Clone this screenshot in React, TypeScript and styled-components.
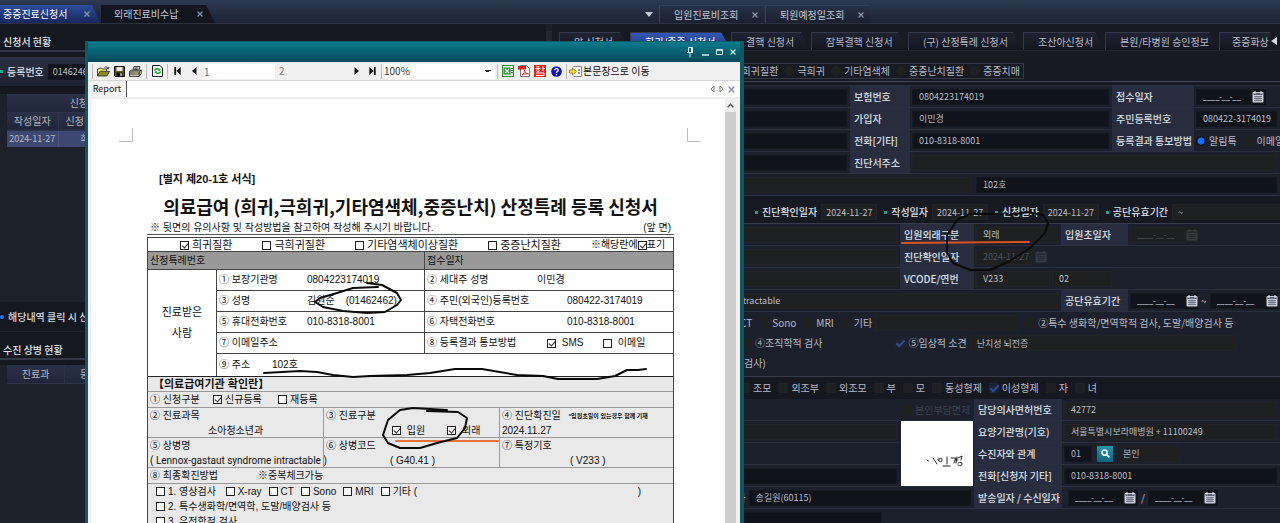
import React, { useId } from "react";
import styled, { createGlobalStyle, css } from "styled-components";

const Global = createGlobalStyle`
  * { box-sizing: border-box; }
  html, body { margin: 0; background: #1c202b; }
  body { font: 10px/14px "Noto Sans CJK KR", sans-serif; color: #b6bac6; }
  button, input, select { font: inherit; color: inherit; margin: 0; }
  button { padding: 0; border: 0; background: none; }
`;

/* ---------- shell ---------- */

const Page = styled.div`
  position: relative;
  display: flex;
  flex-direction: column;
  height: 100vh;
  overflow: hidden;
`;

const TopBar = styled.nav`
  display: flex;
  align-items: flex-end;
  height: 24px;
  flex: none;
  background: linear-gradient(#2c3951, #1c2233);
  border-bottom: 1px solid #2c3140;
`;

const TopGroup = styled.div<{ $width?: number }>`
  display: flex;
  flex: ${(p) => (p.$width ? "none" : "1")};
  width: ${(p) => (p.$width ? `${p.$width}px` : "auto")};
  gap: 1px;
`;

const TopTab = styled.div<{ $look: "active" | "dark" | "plain" }>`
  display: flex;
  align-items: center;
  justify-content: space-between;
  height: 18px;
  color: #c3c7d1;
  ${(p) =>
    p.$look === "active" &&
    css`
      width: 100px;
      padding: 0 10px 0 3px;
      color: #fff;
      background: linear-gradient(#2c4c9c, #16275c);
      clip-path: polygon(0 0, 92% 0, 100% 100%, 0 100%);
    `}
  ${(p) =>
    p.$look === "dark" &&
    css`
      width: 114px;
      padding: 0 12px 0 13px;
      background: #12141f;
      clip-path: polygon(0 0, 92% 0, 100% 100%, 0 100%);
    `}
  ${(p) =>
    p.$look === "plain" &&
    css`
      width: 105px;
      padding: 0 6px 0 14px;
      background: linear-gradient(#273048, #1b2031);
      border-left: 1px solid #3b4358;
      border-top: 1px solid #343c50;
    `}
`;

const CloseButton = styled.button`
  display: flex;
  color: #8b93a8;
`;

const OverflowButton = styled.button`
  display: flex;
  align-items: center;
  width: 14px;
  height: 18px;
  color: #c3cbd9;
`;

const Body = styled.div`
  display: flex;
  flex: 1;
  min-height: 0;
`;

/* ---------- left column ---------- */

const Sidebar = styled.aside`
  display: flex;
  flex-direction: column;
  width: 546px;
  flex: none;
  background: #151821;
`;

const SectionHead = styled.h2`
  margin: 0 0 5px;
  padding: 11px 3px 2px;
  height: 28px;
  font-size: 10px;
  font-weight: 500;
  color: #e4e6ec;
  border-bottom: 2px solid #343746;
`;

const SearchBar = styled.div`
  display: flex;
  align-items: center;
  gap: 4px;
  height: 29px;
  margin-bottom: 8px;
  background: linear-gradient(#2a3044, #1e2333);
  label { font-weight: 500; color: #dfe2ea; }
`;

const Dot = styled.i<{ $size?: number; $color?: string }>`
  flex: none;
  width: ${(p) => p.$size ?? 3}px;
  height: ${(p) => p.$size ?? 3}px;
  border-radius: ${(p) => (p.$size ? "50%" : "0")};
  background: ${(p) => p.$color ?? "#1fa08c"};
`;

const TableWrap = styled.div<{ $height?: number }>`
  flex: ${(p) => (p.$height ? "none" : "1")};
  height: ${(p) => (p.$height ? `${p.$height}px` : "auto")};
  background: #1d212c;
`;

const DataTable = styled.table<{ $inset?: number }>`
  border-collapse: collapse;
  table-layout: fixed;
  width: 174px;
  margin-left: ${(p) => p.$inset ?? 0}px;
  th {
    height: 18px;
    padding: 0;
    font-weight: 400;
    background: linear-gradient(#2a3146, #20263a);
    border: 1px solid #2d3449;
    border-width: 0 1px 1px 0;
  }
  td {
    height: 17px;
    padding: 0;
    text-align: center;
    font-size: 9px;
    background: #3c4871;
    border-right: 1px solid #4a5680;
  }
`;

const Notice = styled.p`
  display: flex;
  align-items: center;
  gap: 4px;
  height: 30px;
  margin: 0;
  font-weight: 500;
  color: #d7dae2;
  border-bottom: 1px solid #1d202b;
`;

/* ---------- right column ---------- */

const Splitter = styled.div`
  width: 6px;
  flex: none;
  margin-top: 7px;
  background: #232733;
`;

const Main = styled.main`
  flex: 1;
  min-width: 0;
  background: #171923;
`;

const SubTabs = styled.div`
  display: flex;
  align-items: center;
  height: 19px;
  margin: 8px 0 12px;
  padding-left: 7px;
  overflow: hidden;
  border-bottom: 1px solid #20232f;
`;

const SubTab = styled.button<{ $width: number; $active?: boolean; $square?: boolean }>`
  flex: none;
  width: ${(p) => p.$width}px;
  height: 18px;
  padding-left: ${(p) => (p.$square ? 12 : 14)}px;
  text-align: left;
  white-space: nowrap;
  color: ${(p) => (p.$active ? "#fff" : "#b6bac6")};
  background: ${(p) => (p.$active ? "linear-gradient(#3158b4, #1b3580)" : "linear-gradient(#1f2231, #131520)")};
  border-left: 1px solid #34384a;
  border-top: 1px solid #34384a;
  clip-path: ${(p) => (p.$square ? "none" : "polygon(0 0, calc(100% - 10px) 0, 100% 100%, 0 100%)")};
`;

const ScrollLeft = styled.button`
  display: flex;
  margin-left: auto;
  padding: 0 3px 0 1px;
  color: #d4d8e0;
`;

const RadioBox = styled.div`
  display: flex;
  align-items: center;
  justify-content: flex-end;
  gap: 6px;
  width: 472px;
  height: 16px;
  padding-right: 3px;
  border: 1px solid #353947;
`;

const Divider = styled.div<{ $top?: number }>`
  height: 5px;
  margin-top: ${(p) => p.$top ?? 0}px;
  border-top: 1px solid #434760;
  border-bottom: 1px solid #292d3b;
`;

const Choice = styled.label<{ $dim?: boolean }>`
  display: inline-flex;
  align-items: center;
  gap: 3px;
  white-space: nowrap;
  color: ${(p) => (p.$dim ? "#3b404d" : "inherit")};
`;

const Radio = styled.input.attrs({ type: "radio" })`
  appearance: none;
  width: 10px;
  height: 10px;
  border-radius: 50%;
  background: #1f2022;
  &:checked { background: radial-gradient(#1670ff 0 3px, #0e1119 4px); }
`;

const Box = styled.input.attrs({ type: "checkbox" })`
  appearance: none;
  position: relative;
  width: 10px;
  height: 10px;
  background: #1f2022;
  &:checked { background: #1b2233; }
  &:checked::after {
    content: "";
    position: absolute;
    left: 3px;
    top: 0;
    width: 3px;
    height: 7px;
    border: solid #2a4f8e;
    border-width: 0 2px 2px 0;
    transform: rotate(45deg);
  }
`;

const Row = styled.div<{ $cols: string }>`
  display: grid;
  grid-template-columns: ${(p) => p.$cols};
  align-items: stretch;
  height: 22px;
  background: #1c202c;
  border-bottom: 1px solid #2a2f3e;
`;

const Cell = styled.div<{ $pad?: number; $gap?: number }>`
  display: flex;
  align-items: center;
  gap: ${(p) => p.$gap ?? 3}px;
  min-width: 0;
  padding: 0 3px 0 ${(p) => p.$pad ?? 2}px;
  white-space: nowrap;
`;

const Label = styled.label`
  display: flex;
  align-items: center;
  padding-left: 4px;
  font-weight: 500;
  color: #dde0e8;
  background: #272d3e;
  white-space: nowrap;
`;

const Field = styled.input<{ $read?: boolean; $width?: number; $pad?: number; $dim?: boolean }>`
  flex: ${(p) => (p.$width ? "none" : "1")};
  width: ${(p) => (p.$width ? `${p.$width}px` : "auto")};
  min-width: 0;
  height: 16px;
  padding: 0 0 0 ${(p) => p.$pad ?? 6}px;
  border: 1px solid ${(p) => (p.$read ? "#212328" : "#141821")};
  outline: 0;
  font-size: 9px;
  color: ${(p) => (p.$dim ? "#4c4f57" : "#b9bdc8")};
  background: ${(p) => (p.$read ? "#1f2022" : "#10131b")};
`;

const DateBox = styled.span<{ $read?: boolean }>`
  display: inline-flex;
  align-items: center;
  width: 70px;
  height: 16px;
  background: ${(p) => (p.$read ? "#1f2022" : "#10131b")};
`;

const DateField = styled(Field)`
  font-family: Roboto, sans-serif;
`;

const IconButton = styled.button<{ $dim?: boolean }>`
  display: flex;
  opacity: ${(p) => (p.$dim ? 0.15 : 1)};
`;

const FindButton = styled.button`
  display: flex;
  align-items: center;
  justify-content: center;
  width: 16px;
  height: 16px;
  margin: 0 4px 0 2px;
  color: #fff;
  background: linear-gradient(#2295ab, #0d6481);
`;

const Band = styled.div<{ $pad: number; $height: number; $gap: number; $top?: number; $tone?: string; $line?: boolean }>`
  display: flex;
  align-items: center;
  gap: ${(p) => p.$gap}px;
  height: ${(p) => p.$height}px;
  padding-top: ${(p) => p.$top ?? 0}px;
  padding-left: ${(p) => p.$pad}px;
  white-space: nowrap;
  background: ${(p) => p.$tone ?? "#1c202c"};
  border-bottom: ${(p) => (p.$line ? "1px solid #383c4a" : "0")};
`;

const DateItem = styled.div`
  display: flex;
  align-items: center;
  gap: 4px;
  label { font-weight: 500; color: #dde0e8; }
`;

const LowerGrid = styled.div`
  display: grid;
  grid-template-columns: 348px 74px 88px 1fr;
  grid-auto-rows: 22px;
  background: #1c202c;
  > * { border-bottom: 1px solid #2a2f3e; }
`;

const Signature = styled.div`
  grid-row: 2 / span 3;
  grid-column: 2;
  display: flex;
  margin: 0 1px 0 1px;
  background: #fff;
`;

const Wide = styled(Cell)`
  grid-column: 1 / span 2;
`;

/* ---------- report window ---------- */

const Window = styled.section`
  position: absolute;
  left: 85px;
  top: 41px;
  bottom: 0;
  width: 659px;
  display: flex;
  flex-direction: column;
  border: solid #0f5866;
  border-width: 1px 4px 0 3px;
  background: #fff;
  color: #111;
  font-family: "Liberation Sans", "Noto Sans CJK KR", sans-serif;
`;

const TitleBar = styled.header`
  display: flex;
  flex: none;
  align-items: center;
  justify-content: flex-end;
  gap: 4px;
  height: 20px;
  padding-right: 2px;
  color: #d7eef2;
  background: linear-gradient(#0a7b8b, #04485a);
`;

const ToolBar = styled.div`
  display: flex;
  flex: none;
  align-items: center;
  height: 19px;
  padding-left: 4px;
  font-family: "Noto Sans CJK KR", sans-serif;
  background: #f0f0f0;
  border-bottom: 1px solid #d8d8d8;
`;

const Tool = styled.button<{ $width: number }>`
  display: flex;
  align-items: center;
  justify-content: center;
  flex: none;
  width: ${(p) => p.$width}px;
  height: 16px;
`;

const Sep = styled.i`
  flex: none;
  width: 1px;
  height: 15px;
  margin: 0 2px;
  background: #bcbcbc;
  &:first-child { margin-left: 0; }
`;

const PageInput = styled.input`
  width: 71px;
  height: 15px;
  padding: 0;
  border: 0;
  background: #fff;
  color: #666;
`;

const PageTotal = styled.span`
  width: 72px;
  padding-left: 4px;
  color: #888;
`;

const Zoom = styled.select`
  width: 111px;
  height: 15px;
  padding: 0;
  border: 0;
  appearance: none;
  font-size: 10px;
  color: #333;
  background: linear-gradient(45deg, transparent 50%, #222 50%) 101px 6px / 3px 3px no-repeat,
    linear-gradient(-45deg, transparent 50%, #222 50%) 104px 6px / 3px 3px no-repeat, #fff;
`;

const MoveButton = styled.button`
  display: flex;
  align-items: center;
  gap: 1px;
  white-space: nowrap;
`;

const TabStrip = styled.div`
  display: flex;
  flex: none;
  justify-content: space-between;
  height: 18px;
  border-bottom: 2px solid #efefef;
`;

const ReportTab = styled.button`
  width: 39px;
  font-size: 9px;
  color: #222;
  background: #f4f4f4;
  border-right: 1px solid #555;
  font-family: "Noto Sans CJK KR", sans-serif;
`;

const StripTools = styled.div`
  display: flex;
  align-items: center;
  gap: 4px;
  padding-right: 5px;
  color: #777;
`;

const Viewer = styled.div`
  display: flex;
  flex: 1;
  min-height: 0;
  border-left: 3px solid #f0f0f0;
`;

const Paper = styled.div`
  flex: 1;
  min-width: 0;
  overflow: hidden;
`;

const ScrollTrack = styled.div`
  display: flex;
  flex-direction: column;
  align-items: center;
  width: 15px;
  padding-right: 4px;
  background: #f0f0f0;
`;

const ScrollUp = styled.button`
  display: flex;
  align-items: center;
  height: 13px;
  color: #555;
`;

const ScrollThumb = styled.div`
  flex: 1;
  width: 11px;
  background: #cdcdcd;
`;

const Corners = styled.div`
  display: flex;
  justify-content: space-between;
  margin: 29px 24px 29px 28px;
  i { width: 14px; height: 14px; border-bottom: 1px solid #bbb; }
  i:first-child { border-right: 1px solid #bbb; }
  i:last-child { border-left: 1px solid #bbb; }
`;

const Sheet = styled.article`
  width: 527px;
  margin-left: 56px;
`;

const FormNo = styled.p`
  margin: 0 0 3px 12px;
  font-size: 11px;
  line-height: 16px;
  font-weight: 700;
`;

const DocTitle = styled.h1`
  margin: 0;
  font: 700 18px/32px "Noto Sans CJK KR", sans-serif;
  text-align: center;
  white-space: nowrap;
`;

const SubLine = styled.p`
  display: flex;
  justify-content: space-between;
  margin: 0 0 2px;
  padding: 0 3px;
  line-height: 12px;
  border-bottom: 1px solid #555;
`;

const Form = styled.div`
  border: 1px solid #444;
  border-bottom: 0;
`;

const DocRow = styled.div<{ $h: number; $cols?: string; $bg?: string }>`
  display: grid;
  grid-template-columns: ${(p) => p.$cols ?? "1fr"};
  height: ${(p) => p.$h}px;
  background: ${(p) => p.$bg ?? "transparent"};
  border-bottom: 1px solid #444;
  &:last-child { border-bottom-width: 0; }
  > * + * { border-left: 1px solid #444; }
`;

const Applicant = styled.div`
  display: grid;
  grid-template-columns: 69px 1fr;
  border-bottom: 1px solid #222;
`;

const ApplicantName = styled.div`
  display: flex;
  align-items: center;
  justify-content: center;
  border-right: 1px solid #444;
  font-size: 11px;
  line-height: 21px;
  text-align: center;
`;

const DocCell = styled.div<{ $pad?: number; $gap?: number }>`
  display: flex;
  align-items: center;
  gap: ${(p) => p.$gap ?? 0}px;
  padding-left: ${(p) => p.$pad ?? 2}px;
  min-width: 0;
  white-space: pre;
`;

const Term = styled.span<{ $w?: number }>`
  flex: none;
  width: ${(p) => (p.$w ? `${p.$w}px` : "auto")};
`;

const CloseParen = styled.span`
  margin: 0 32px 0 auto;
`;

const Provider = styled.div`
  background: #e9e9e9;
  ${DocRow} { border-color: #999; }
  ${DocRow} > * + * { border-color: #999; }
`;

const ProviderTitle = styled.h2`
  margin: 0;
  padding-left: 5px;
  font-size: 11px;
  line-height: 14px;
  font-weight: 700;
  border-bottom: 1px solid #999;
`;

const Stack = styled.div`
  display: flex;
  flex-direction: column;
  min-width: 0;
  padding-left: 2px;
`;

const Line = styled.div<{ $pad?: number; $gap?: number }>`
  display: flex;
  align-items: center;
  gap: ${(p) => p.$gap ?? 0}px;
  height: 15px;
  padding-left: ${(p) => p.$pad ?? 0}px;
  white-space: pre;
`;

const Diagnosis = styled(Line)`
  font-family: Roboto, sans-serif;
`;

const Tiny = styled.small`
  margin-left: 8px;
  font-size: 6px;
  font-weight: 700;
`;

const Mark = styled.label<{ $size?: number }>`
  display: flex;
  align-items: center;
  gap: 3px;
  font-size: ${(p) => p.$size ?? 10}px;
`;

const Hint = styled.label`
  display: flex;
  align-items: center;
`;

const Tick = styled.input.attrs({ type: "checkbox" })`
  appearance: none;
  position: relative;
  flex: none;
  width: 9px;
  height: 9px;
  border: 1px solid #222;
  background: #fff;
  &:checked::after {
    content: "";
    position: absolute;
    left: 2px;
    top: 0;
    width: 3px;
    height: 5px;
    border: solid #222;
    border-width: 0 1px 1px 0;
    transform: rotate(40deg);
  }
`;

const Ink = styled.svg`
  position: absolute;
  left: 0;
  top: 0;
  pointer-events: none;
  fill: none;
  stroke-linecap: round;
  stroke-linejoin: round;
`;

/* ---------- icons ---------- */

const CrossIcon = ({ size = 6 }: { size?: number }) => (
  <svg width={size} height={size} viewBox="0 0 6 6" stroke="currentColor" strokeWidth="1.2">
    <path d="M.5.5l5 5M5.5.5l-5 5" />
  </svg>
);

const CalendarIcon = () => (
  <svg width="12" height="12" viewBox="0 0 12 12">
    <rect x="0.5" y="1" width="11" height="10.5" rx="1" fill="#c9ccd6" />
    <rect x="1.5" y="2" width="9" height="2" fill="#5b6275" />
    <path d="M3 0v3M9 0v3" stroke="#e6e8ee" />
    <path d="M2 5.500h8M2 7.500h8M2 9.500h8M4 5v5M6 5v5M8 5v5" stroke="#4a5062" strokeWidth=".6" />
  </svg>
);

const SearchIcon = () => (
  <svg width="9" height="9" viewBox="0 0 9 9" fill="none" stroke="currentColor" strokeWidth="1.6">
    <circle cx="3.6" cy="3.6" r="2.6" />
    <path d="M5.6 5.6l2.8 2.8" />
  </svg>
);

const FolderIcon = () => (
  <svg width="13" height="11" viewBox="0 0 13 11">
    <path d="M.5 10V3h1l1-1h2l1 1h4v2" fill="#f5ef7a" stroke="#333" strokeWidth=".9" />
    <path d="M.5 10L3 5.3h9.600L9.800 10z" fill="#8e8a1c" stroke="#333" strokeWidth=".9" />
    <path d="M7.500 1.400c1.500-1 3-.6 3.600 1M11.800 1l-.5 1.800-1.700-.6" fill="none" stroke="#222" strokeWidth=".9" />
  </svg>
);

const SaveIcon = () => (
  <svg width="11" height="11" viewBox="0 0 11 11">
    <path d="M.5.5h10v10h-9l-1-1z" fill="#5c5b12" stroke="#111" />
    <rect x="2.500" y="1" width="6" height="4" fill="#e6e6e6" />
    <rect x="2.500" y="6.500" width="6" height="4" fill="#111" />
    <rect x="6.300" y="7.300" width="1.400" height="2.600" fill="#eee" />
  </svg>
);

const PrintIcon = () => (
  <svg width="13" height="11" viewBox="0 0 13 11" stroke="#222" strokeWidth=".9">
    <path d="M3.500 5L5 .6h6L9.500 5" fill="#fff" />
    <path d="M5.300 2h4M4.900 3.400h4" />
    <path d="M.6 5.400L2.400 4.200h9.800v3.600l-2 2.600H.6z" fill="#d6d6c8" />
    <path d="M.6 6h9.600l2-1.800M10.200 6v4M.6 8h9.600" fill="none" />
    <path d="M6 7h3" stroke="#c8b800" />
  </svg>
);

const RefreshIcon = () => (
  <svg width="11" height="12" viewBox="0 0 11 12" fill="none">
    <path d="M.5.5h7.500l2.500 2.500v8.500h-10z" fill="#fff" stroke="#222" />
    <path d="M2.500 5.500c.6-2 3-2.400 4.500-1M8.500 6.500c-.6 2-3 2.400-4.500 1" stroke="#19a03c" strokeWidth="1.500" />
    <path d="M8.300 3v2.700H5.600zM2.700 9V6.300h2.700z" fill="#19a03c" />
  </svg>
);

const StepIcon = ({ dir, bar }: { dir: "left" | "right"; bar?: boolean }) => (
  <svg width="7" height="8" viewBox="0 0 7 8" fill="#111">
    <g transform={dir === "right" ? "matrix(-1 0 0 1 7 0)" : undefined}>
      {bar && <path d="M.3 0h1.800v8H.3z" />}
      {bar ? <path d="M6.700 0v8L2.400 4z" /> : <path d="M5.500 0v8L1 4z" />}
    </g>
  </svg>
);

const ExcelIcon = () => (
  <svg width="12" height="12" viewBox="0 0 12 12">
    <rect x=".5" y=".5" width="11" height="11" fill="#e4f0e2" stroke="#3a8a3c" />
    <rect x="1.500" y="2.500" width="7" height="7" fill="#2f8f3a" />
    <path d="M3 4l4 4M7 4L3 8" stroke="#fff" strokeWidth="1.300" />
    <path d="M9 3.500h2M9 5.500h2M9 7.500h2" stroke="#3a8a3c" />
  </svg>
);

const PdfIcon = () => (
  <svg width="12" height="12" viewBox="0 0 12 12">
    <path d="M2.500.5h6l3 3v8h-9z" fill="#fff" stroke="#777" />
    <rect x="0" y="1" width="8" height="3.500" fill="#d32118" />
    <path d="M4 10c2-1.500 2.500-3 2.500-5 .3 2.500 1.500 3.500 4 3.800-2.500-.2-4.500.2-6.500 1.200z" fill="none" stroke="#d32118" strokeWidth=".9" />
  </svg>
);

const HwpIcon = () => (
  <svg width="12" height="12" viewBox="0 0 12 12">
    <rect width="12" height="12" fill="#d92a20" />
    <path d="M1.500 3.500h5M2.500 1.800h3M9 1.500v4.500M9 3.500h2M2 8h8v2.500H2" stroke="#fff" fill="none" />
    <circle cx="4" cy="5.500" r="1.200" fill="none" stroke="#fff" strokeWidth=".9" />
  </svg>
);

const HelpIcon = () => (
  <svg width="11" height="11" viewBox="0 0 11 11">
    <circle cx="5.500" cy="5.500" r="5.300" fill="#0a12b8" />
    <path d="M3.800 4.200c0-2.200 3.500-2.200 3.500 0 0 1.200-1.800 1.200-1.800 2.600" fill="none" stroke="#fff" strokeWidth="1.300" />
    <circle cx="5.500" cy="8.600" r=".8" fill="#fff" />
  </svg>
);

const MoveIcon = () => (
  <svg width="13" height="11" viewBox="0 0 13 11">
    <path d="M4.500.5h8v10h-8" fill="#fff" stroke="#888" />
    <path d="M.5 4h3V2l4 3.500-4 3.500V7h-3z" fill="#f6d93a" stroke="#8a7a10" strokeWidth=".8" />
    <path d="M9 4h2M9 7h2" stroke="#333" />
  </svg>
);

/* ---------- small pieces ---------- */

const DateEntry = ({ name, read }: { name: string; read?: boolean }) => (
  <DateBox $read={read}>
    <DateField aria-label={name} defaultValue="____-__-__" $width={56} $read={read} $dim={read} />
    <IconButton $dim={read} aria-label={`${name} 달력`}>
      <CalendarIcon />
    </IconButton>
  </DateBox>
);

const LabelCell = ({ text, children }: { text: string; children: (id: string) => React.ReactNode }) => {
  const id = useId();
  return (
    <>
      <Label htmlFor={id}>{text}</Label>
      {children(id)}
    </>
  );
};

const Check = ({ text, on, size }: { text: string; on?: boolean; size?: number }) => (
  <Mark $size={size}>
    <Tick defaultChecked={on} />
    {text}
  </Mark>
);

const ISSUE_DATES = ["진단확인일자", "작성일자", "신청일자"];
const KIN = ["조모", "외조부", "외조모", "부", "모", "동성형제", "이성형제", "자", "녀"];
const SUB_TABS: { name: string; width: number; active?: boolean; square?: boolean }[] = [
  { name: "암 신청서", width: 71 },
  { name: "희귀/중증 신청서", width: 101, active: true },
  { name: "결핵 신청서", width: 80 },
  { name: "잠복결핵 신청서", width: 97 },
  { name: "(구) 산정특례 신청서", width: 115 },
  { name: "조산아신청서", width: 82 },
  { name: "본원/타병원 승인정보", width: 114 },
  { name: "중증화상", width: 51, square: true },
];

const TOP_COLS = "298px 60px 1fr 82px 86px";
const MID_COLS = "348px 74px 87px 67px 1fr";

const SidePanel = () => (
  <Sidebar>
    <SectionHead>신청서 현황</SectionHead>
    <SearchBar>
      <Dot />
      <label htmlFor="reg-no">등록번호</label>
      <Field id="reg-no" defaultValue="01462462" $width={70} $pad={4} />
    </SearchBar>
    <TableWrap $height={208}>
      <DataTable $inset={7}>
        <colgroup>
          <col width="51" />
          <col width="61" />
          <col width="62" />
        </colgroup>
        <thead>
          <tr>
            <th colSpan={3}>신청서 정보</th>
          </tr>
          <tr>
            <th>작성일자</th>
            <th>신청서구분</th>
            <th>상태</th>
          </tr>
        </thead>
        <tbody>
          <tr>
            <td>2024-11-27</td>
            <td>희귀</td>
            <td>등록</td>
          </tr>
        </tbody>
      </DataTable>
    </TableWrap>
    <Notice>
      <Dot $size={4} $color="#1670ff" />
      해당내역 클릭 시 신청서 조회
    </Notice>
    <SectionHead>수진 상병 현황</SectionHead>
    <TableWrap>
      <DataTable $inset={7}>
        <thead>
          <tr>
            <th>진료과</th>
            <th>등록일</th>
            <th>상병</th>
          </tr>
        </thead>
      </DataTable>
    </TableWrap>
  </Sidebar>
);

const MainPanel = () => (
  <Main>
    <SubTabs>
      {SUB_TABS.map(({ name, width, active, square }) => (
        <SubTab key={name} $width={width} $active={active} $square={square}>
          {name}
        </SubTab>
      ))}
      <ScrollLeft aria-label="이전 탭">
        <svg width="6" height="8" viewBox="0 0 6 8" fill="currentColor">
          <path d="M6 0v8L0 4z" />
        </svg>
      </ScrollLeft>
    </SubTabs>
    <RadioBox>
      {["희귀질환", "극희귀", "기타염색체", "중증난치질환", "중증치매"].map((t) => (
        <Choice key={t}>
          <Radio name="kind" />
          {t}
        </Choice>
      ))}
    </RadioBox>
    <Divider $top={2} />

    <Row $cols={TOP_COLS}>
      <Cell>
        <Field aria-label="보험구분" />
      </Cell>
      <LabelCell text="보험번호">
        {(id) => (
          <Cell>
            <Field id={id} defaultValue="0804223174019" />
          </Cell>
        )}
      </LabelCell>
      <Label as="span">접수일자</Label>
      <Cell>
        <DateEntry name="접수일자" />
      </Cell>
    </Row>
    <Row $cols={TOP_COLS}>
      <Cell>
        <Field aria-label="보장기관" />
      </Cell>
      <LabelCell text="가입자">
        {(id) => (
          <Cell>
            <Field id={id} defaultValue="이민경" />
          </Cell>
        )}
      </LabelCell>
      <LabelCell text="주민등록번호">
        {(id) => (
          <Cell>
            <Field id={id} defaultValue="080422-3174019" />
          </Cell>
        )}
      </LabelCell>
    </Row>
    <Row $cols={TOP_COLS}>
      <Cell>
        <Field aria-label="휴대전화" />
      </Cell>
      <LabelCell text="전화[기타]">
        {(id) => (
          <Cell>
            <Field id={id} defaultValue="010-8318-8001" />
          </Cell>
        )}
      </LabelCell>
      <Label as="span">등록결과 통보방법</Label>
      <Cell $gap={7}>
        <Choice>
          <Radio name="notice" defaultChecked />
          알림톡
        </Choice>
        <Choice>
          <Radio name="notice" />
          이메일
        </Choice>
      </Cell>
    </Row>
    <Row $cols="298px 60px 1fr">
      <Cell>
        <Field aria-label="이메일" />
      </Cell>
      <LabelCell text="진단서주소">
        {(id) => (
          <Cell>
            <Field id={id} $read />
          </Cell>
        )}
      </LabelCell>
    </Row>
    <Row $cols="422px 1fr">
      <Cell>
        <Field aria-label="주소" $read />
      </Cell>
      <Cell>
        <Field aria-label="상세주소" defaultValue="102호" />
      </Cell>
    </Row>

    <Band $pad={203} $height={28} $gap={7} $top={5} $tone="#171922" $line>
      {ISSUE_DATES.map((name) => (
        <DateItem key={name}>
          <Dot />
          <label htmlFor={name}>{name}</label>
          <Field id={name} defaultValue="2024-11-27" $width={56} $pad={4} $read />
        </DateItem>
      ))}
      <DateItem>
        <Dot />
        <label htmlFor="valid">공단유효기간</label>
        <Field id="valid" defaultValue="~" $width={110} $pad={5} $read />
      </DateItem>
    </Band>

    <Row $cols={MID_COLS}>
      <Cell>
        <Field aria-label="진료과" $read />
      </Cell>
      <LabelCell text="입원외래구분">
        {(id) => (
          <Cell>
            <Field id={id} defaultValue="외래" $read />
          </Cell>
        )}
      </LabelCell>
      <Label as="span">입원초일자</Label>
      <Cell>
        <DateEntry name="입원초일자" read />
      </Cell>
    </Row>
    <Row $cols={MID_COLS}>
      <Cell>
        <Field aria-label="진료의사" $read />
      </Cell>
      <LabelCell text="진단확인일자">
        {(id) => (
          <Cell>
            <Field id={id} defaultValue="2024-11-27" $width={56} $read $dim />
            <IconButton $dim aria-label="진단확인일자 달력">
              <CalendarIcon />
            </IconButton>
          </Cell>
        )}
      </LabelCell>
    </Row>
    <Row $cols="348px 74px 1fr">
      <Cell>
        <Field aria-label="상병코드" $read />
      </Cell>
      <LabelCell text="VCODE/연번">
        {(id) => (
          <Cell $gap={2}>
            <Field id={id} defaultValue="V233" $width={74} $read />
            <Field aria-label="연번" defaultValue="02" $width={60} $read />
          </Cell>
        )}
      </LabelCell>
    </Row>
    <Row $cols="509px 67px 1fr">
      <Cell>
        <Field aria-label="상병명" defaultValue="Lennox-gastaut syndrome intractable" $pad={69} $read />
      </Cell>
      <Label as="span">공단유효기간</Label>
      <Cell>
        <DateEntry name="유효기간 시작" />
        ~
        <DateEntry name="유효기간 끝" />
      </Cell>
    </Row>

    <Band $pad={175} $height={21} $gap={7}>
      {["CT", "Sono", "MRI"].map((t) => (
        <Choice key={t}>
          <Box />
          {t}
        </Choice>
      ))}
      <Choice>
        <Box />
        기타
        <Field aria-label="기타 검사" $width={143} $read />
      </Choice>
      <Choice>
        <Box />
        ②특수 생화학/면역학적 검사, 도말/배양검사 등
      </Choice>
    </Band>
    <Band $pad={190} $height={20} $gap={73}>
      <Choice>
        <Box />
        ④조직학적 검사
      </Choice>
      <Choice>
        <Box defaultChecked />
        ⑤임상적 소견
        <Field aria-label="임상적 소견" defaultValue="난치성 뇌전증" $width={266} $read />
      </Choice>
    </Band>
    <Band $pad={192} $height={20} $gap={0}>
      검사)
    </Band>
    <Band $pad={192} $height={4} $gap={0} $line />
    <Band $pad={188} $height={22} $gap={7} $tone="#161821">
      {KIN.map((t) => (
        <Choice key={t}>
          <Box defaultChecked={t === "이성형제"} />
          {t}
        </Choice>
      ))}
    </Band>

    <LowerGrid>
      <Cell />
      <Cell $gap={2}>
        <Choice $dim>
          <Box disabled />
          본인부담면제
        </Choice>
      </Cell>
      <LabelCell text="담당의사면허번호">
        {(id) => (
          <Cell>
            <Field id={id} defaultValue="42772" $read />
          </Cell>
        )}
      </LabelCell>

      <Cell>
        <Field aria-label="요양기관" $read />
      </Cell>
      <Signature>
        <svg width="72" height="65" viewBox="0 0 72 65" fill="none" stroke="#222" strokeWidth="1" strokeLinecap="round">
          <path d="M26 39l1.500 1M32 37l4 6M38 38q3-2 3 1t-3 1 0-2M46 36v7M42 45h7" />
          <path d="M50 37h5l-2 5M56 36l-1 6M54 39h3M57 37l4-2-1 4M57 42q4-2 4 1t-4 1" />
        </svg>
      </Signature>
      <LabelCell text="요양기관명(기호)">
        {(id) => (
          <Cell>
            <Field id={id} defaultValue="서울특별시보라매병원 + 11100249" $read />
          </Cell>
        )}
      </LabelCell>

      <Cell />
      <LabelCell text="수진자와 관계">
        {(id) => (
          <Cell>
            <Field id={id} defaultValue="01" $width={28} />
            <FindButton aria-label="관계 찾기">
              <SearchIcon />
            </FindButton>
            <Field aria-label="관계명" defaultValue="본인" $width={60} $pad={2} $read />
          </Cell>
        )}
      </LabelCell>

      <Cell>
        <Field aria-label="신청인" />
      </Cell>
      <LabelCell text="전화[신청자 기타]">
        {(id) => (
          <Cell>
            <Field id={id} defaultValue="010-8318-8001" />
          </Cell>
        )}
      </LabelCell>

      <Wide $pad={166}>
        담당자
        <Field aria-label="담당자" defaultValue="송길원(60115)" />
      </Wide>
      <Label as="span">발송일자 / 수신일자</Label>
      <Cell $pad={6}>
        <DateEntry name="발송일자" />
        /
        <DateEntry name="수신일자" />
      </Cell>
      <Cell>
        <Field aria-label="비고" $width={328} />
      </Cell>
    </LowerGrid>
  </Main>
);

const PAIRS: [string, string, string, React.ReactNode, number][] = [
  ["① 보장기관명", "0804223174019", "② 세대주 성명", "이민경", 110],
  ["③ 성명", "김원준    (01462462)", "④ 주민(외국인)등록번호", "080422-3174019", 140],
  ["⑤ 휴대전화번호", "010-8318-8001", "⑥ 자택전화번호", "010-8318-8001", 140],
];

const ReportWindow = () => (
  <Window>
    <TitleBar>
      <Tool $width={12} aria-label="고정">
        <svg width="8" height="11" viewBox="0 0 8 11" fill="none" stroke="currentColor">
          <path d="M2.500.5h4v5h-4zM1 5.500h6M4 6v4.500M5.500.5v5" />
        </svg>
      </Tool>
      <Tool $width={10} aria-label="최소화">
        <svg width="7" height="7" viewBox="0 0 7 7" stroke="currentColor" strokeWidth="1.500">
          <path d="M0 6h7" />
        </svg>
      </Tool>
      <Tool $width={10} aria-label="최대화">
        <svg width="7" height="6" viewBox="0 0 7 6" fill="none" stroke="currentColor">
          <path d="M.5.5h6v5h-6zM.5 1.300h6" />
        </svg>
      </Tool>
      <Tool $width={10} aria-label="닫기">
        <CrossIcon />
      </Tool>
    </TitleBar>
    <ToolBar>
      <Sep />
      <Tool $width={17} aria-label="열기"><FolderIcon /></Tool>
      <Tool $width={15} aria-label="저장"><SaveIcon /></Tool>
      <Tool $width={17} aria-label="인쇄"><PrintIcon /></Tool>
      <Sep />
      <Tool $width={16} aria-label="새로고침"><RefreshIcon /></Tool>
      <Sep />
      <Tool $width={14} aria-label="처음"><StepIcon dir="left" bar /></Tool>
      <Tool $width={20} aria-label="이전"><StepIcon dir="left" /></Tool>
      <PageInput aria-label="쪽" defaultValue="1" />
      <PageTotal>2</PageTotal>
      <Tool $width={18} aria-label="다음"><StepIcon dir="right" /></Tool>
      <Tool $width={14} aria-label="마지막"><StepIcon dir="right" bar /></Tool>
      <Sep />
      <Zoom aria-label="배율" defaultValue="100%">
        <option>100%</option>
      </Zoom>
      <Sep />
      <Tool $width={16} aria-label="엑셀"><ExcelIcon /></Tool>
      <Tool $width={16} aria-label="PDF"><PdfIcon /></Tool>
      <Tool $width={16} aria-label="한글"><HwpIcon /></Tool>
      <Tool $width={16} aria-label="도움말"><HelpIcon /></Tool>
      <Sep />
      <MoveButton>
        <MoveIcon />
        본문창으로 이동
      </MoveButton>
    </ToolBar>
    <TabStrip>
      <ReportTab>Report</ReportTab>
      <StripTools>
        <svg width="14" height="8" viewBox="0 0 14 8" fill="none" stroke="currentColor">
          <path d="M4 1v6L1 4zM10 1v6l3-3z" />
        </svg>
        <CloseButton aria-label="보고서 닫기">
          <CrossIcon size={7} />
        </CloseButton>
      </StripTools>
    </TabStrip>
    <Viewer>
      <Paper>
        <Corners>
          <i />
          <i />
        </Corners>
        <Sheet>
          <FormNo>[별지 제20-1호 서식]</FormNo>
          <DocTitle>의료급여 (희귀,극희귀,기타염색체,중증난치) 산정특례 등록 신청서</DocTitle>
          <SubLine>
            <span>※ 뒷면의 유의사항 및 작성방법을 참고하여 작성해 주시기 바랍니다.</span>
            <span>(앞 면)</span>
          </SubLine>
          <Form>
            <DocRow $h={14}>
              <DocCell $pad={32} $gap={30}>
                <Check text="희귀질환" on size={11} />
                <Check text="극희귀질환" size={11} />
                <Check text="기타염색체이상질환" size={11} />
                <Check text="중증난치질환" size={11} />
                <Hint>
                  ※해당란에
                  <Tick defaultChecked />
                  표기
                </Hint>
              </DocCell>
            </DocRow>
            <DocRow $h={18} $cols="276px 1fr" $bg="#999">
              <DocCell>산정특례번호</DocCell>
              <DocCell>접수일자</DocCell>
            </DocRow>
            <Applicant>
              <ApplicantName>
                진료받은
                <br />
                사람
              </ApplicantName>
              <div>
                {PAIRS.map(([a, av, b, bv, w]) => (
                  <DocRow key={a} $h={21} $cols="207px 1fr">
                    <DocCell>
                      <Term $w={88}>{a}</Term>
                      {av}
                    </DocCell>
                    <DocCell>
                      <Term $w={w}>{b}</Term>
                      {bv}
                    </DocCell>
                  </DocRow>
                ))}
                <DocRow $h={21} $cols="207px 1fr">
                  <DocCell>⑦ 이메일주소</DocCell>
                  <DocCell>
                    <Term $w={120}>⑧ 등록결과 통보방법</Term>
                    <Term $w={56}>
                      <Check text=" SMS" on />
                    </Term>
                    <Check text=" 이메일" />
                  </DocCell>
                </DocRow>
                <DocRow $h={22}>
                  <DocCell>
                    <Term $w={53}>⑨ 주소</Term>
                    102호
                  </DocCell>
                </DocRow>
              </div>
            </Applicant>
            <Provider>
              <ProviderTitle>【의료급여기관 확인란】</ProviderTitle>
              <DocRow $h={16}>
                <DocCell>
                  <Term $w={63}>① 신청구분</Term>
                  <Term $w={65}>
                    <Check text="신규등록" on />
                  </Term>
                  <Check text="재등록" />
                </DocCell>
              </DocRow>
              <DocRow $h={30} $cols="175px 176px 1fr">
                <Stack>
                  <Line>② 진료과목</Line>
                  <Line $pad={58}>소아청소년과</Line>
                </Stack>
                <Stack>
                  <Line>③ 진료구분</Line>
                  <Line $pad={66} $gap={22}>
                    <Check text=" 입원" on />
                    <Check text=" 외래" on />
                  </Line>
                </Stack>
                <Stack>
                  <Line>
                    ④ 진단확진일<Tiny>*입원초일이 있는경우 함께 기재</Tiny>
                  </Line>
                  <Line>2024.11.27</Line>
                </Stack>
              </DocRow>
              <DocRow $h={30} $cols="175px 176px 1fr">
                <Stack>
                  <Line>⑤ 상병명</Line>
                  <Diagnosis>{"( Lennox-gastaut syndrome intractable )"}</Diagnosis>
                </Stack>
                <Stack>
                  <Line>⑥ 상병코드</Line>
                  <Line $pad={64}>( G40.41 )</Line>
                </Stack>
                <Stack>
                  <Line>⑦ 특정기호</Line>
                  <Line $pad={68}>( V233 )</Line>
                </Stack>
              </DocRow>
              <DocRow $h={16}>
                <DocCell>
                  <Term $w={108}>⑧ 최종확진방법</Term>
                  ※중복체크가능
                </DocCell>
              </DocRow>
              <Line $pad={8} $gap={7}>
                <Check text="1. 영상검사 " />
                <Check text="X-ray" />
                <Check text="CT" />
                <Check text="Sono" />
                <Check text="MRI" />
                <Check text="기타 (" />
                <CloseParen>)</CloseParen>
              </Line>
              <Line $pad={8}>
                <Check text="2. 특수생화학/면역학, 도말/배양검사 등" />
              </Line>
              <Line $pad={8}>
                <Check text="3. 유전학적 검사" />
              </Line>
            </Provider>
          </Form>
        </Sheet>
      </Paper>
      <ScrollTrack>
        <ScrollUp aria-label="위로">
          <svg width="7" height="5" viewBox="0 0 7 5" fill="none" stroke="currentColor" strokeWidth="1.500">
            <path d="M.7 4.200L3.500 1.300l2.800 2.900" />
          </svg>
        </ScrollUp>
        <ScrollThumb />
      </ScrollTrack>
    </Viewer>
  </Window>
);

const PenMarks = () => (
  <Ink width="1280" height="523" viewBox="0 0 1280 523" aria-hidden="true">
    <g stroke="#e8703a" strokeWidth="2">
      <path d="M396 441H498" />
      <path d="M902 243L1029 242" stroke="#d9531e" />
    </g>
    <g stroke="#0a0a0a" strokeWidth="2">
      <path d="M367 283l15 2 15 8 4 7-4 5-12 7-18 1-24-2-20-4-8-5 5-4 17-5 16-5 25-1" />
      <path d="M264 373l36-2 17 1 16 3 20 2 17-1 37-1 23-2 25-4h27l35 6 26 1 15 3h39l18-3 12-6h11l8-1" />
      <path d="M447 410l-34-2-13 2-12 10-5 15 5 8 12 5h20l17-5 20-5 8-10 2-10-9-6-31-1" />
      <path d="M998 214h-28l-13 6-10 15v17l6 11 17 7h20l20-9 20-13 15-15 3-10-5-8-16-3-17 3" />
    </g>
  </Ink>
);

const Tab = ({ name, look }: { name: string; look: "active" | "dark" | "plain" }) => (
  <TopTab $look={look}>
    {name}
    <CloseButton aria-label={`${name} 닫기`}>
      <CrossIcon />
    </CloseButton>
  </TopTab>
);

export default function App() {
  return (
    <>
      <Global />
      <Page>
        <TopBar>
          <TopGroup $width={645}>
            <Tab name="중증진료신청서" look="active" />
            <Tab name="외래진료비수납" look="dark" />
          </TopGroup>
          <OverflowButton aria-label="탭 목록">
            <svg width="8" height="5" viewBox="0 0 8 5" fill="currentColor">
              <path d="M0 0h8L4 5z" />
            </svg>
          </OverflowButton>
          <TopGroup>
            <Tab name="입원진료비조회" look="plain" />
            <Tab name="퇴원예정일조회" look="plain" />
          </TopGroup>
        </TopBar>
        <Body>
          <SidePanel />
          <Splitter />
          <MainPanel />
        </Body>
        <ReportWindow />
        <PenMarks />
      </Page>
    </>
  );
}
